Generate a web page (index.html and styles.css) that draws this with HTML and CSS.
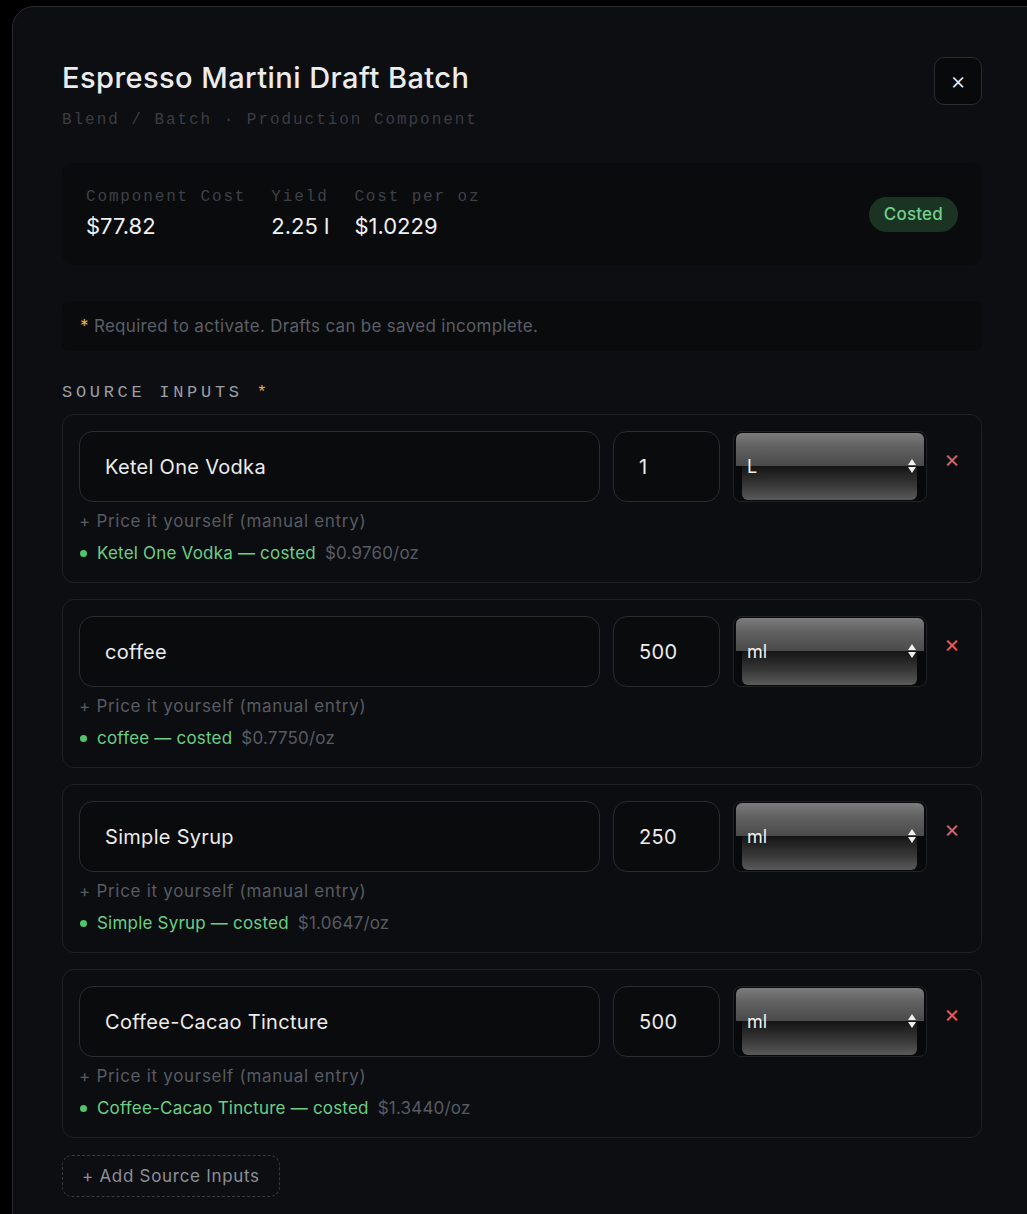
FILE: index.html
```html
<!DOCTYPE html>
<html>
<head>
<meta charset="utf-8">
<link rel="stylesheet" href="styles.css">
</head>
<body>
<div class="modal">
  <div class="head">
    <div>
      <h1 class="title">Espresso Martini Draft Batch</h1>
      <div class="sub">Blend / Batch · Production Component</div>
    </div>
    <button class="close">×</button>
  </div>

  <div class="stats">
    <div class="stat">
      <div class="stat-label">Component Cost</div>
      <div class="stat-value">$77.82</div>
    </div>
    <div class="stat">
      <div class="stat-label">Yield</div>
      <div class="stat-value">2.25 l</div>
    </div>
    <div class="stat">
      <div class="stat-label">Cost per oz</div>
      <div class="stat-value">$1.0229</div>
    </div>
    <div class="badge">Costed</div>
  </div>

  <div class="notice"><span class="ast">*</span> Required to activate. Drafts can be saved incomplete.</div>

  <div class="section-label">SOURCE INPUTS <span class="ast">*</span></div>

  <div class="cards">
    <div class="card">
      <div class="row">
        <div class="field name">Ketel One Vodka</div>
        <div class="field qty">1</div>
        <div class="select"><div class="sel-top"></div><div class="sel-bot"></div><span class="sel-text">L</span><span class="sel-arrows"><i class="up"></i><i class="down"></i></span></div>
        <div class="remove">×</div>
      </div>
      <div class="manual">+ Price it yourself (manual entry)</div>
      <div class="status"><span class="dot"></span><span class="ok">Ketel One Vodka — costed</span><span class="price">$0.9760/oz</span></div>
    </div>
    <div class="card">
      <div class="row">
        <div class="field name">coffee</div>
        <div class="field qty">500</div>
        <div class="select"><div class="sel-top"></div><div class="sel-bot"></div><span class="sel-text">ml</span><span class="sel-arrows"><i class="up"></i><i class="down"></i></span></div>
        <div class="remove">×</div>
      </div>
      <div class="manual">+ Price it yourself (manual entry)</div>
      <div class="status"><span class="dot"></span><span class="ok">coffee — costed</span><span class="price">$0.7750/oz</span></div>
    </div>
    <div class="card">
      <div class="row">
        <div class="field name">Simple Syrup</div>
        <div class="field qty">250</div>
        <div class="select"><div class="sel-top"></div><div class="sel-bot"></div><span class="sel-text">ml</span><span class="sel-arrows"><i class="up"></i><i class="down"></i></span></div>
        <div class="remove">×</div>
      </div>
      <div class="manual">+ Price it yourself (manual entry)</div>
      <div class="status"><span class="dot"></span><span class="ok">Simple Syrup — costed</span><span class="price">$1.0647/oz</span></div>
    </div>
    <div class="card">
      <div class="row">
        <div class="field name">Coffee-Cacao Tincture</div>
        <div class="field qty">500</div>
        <div class="select"><div class="sel-top"></div><div class="sel-bot"></div><span class="sel-text">ml</span><span class="sel-arrows"><i class="up"></i><i class="down"></i></span></div>
        <div class="remove">×</div>
      </div>
      <div class="manual">+ Price it yourself (manual entry)</div>
      <div class="status"><span class="dot"></span><span class="ok">Coffee-Cacao Tincture — costed</span><span class="price">$1.3440/oz</span></div>
    </div>
  </div>

  <button class="add">+ Add Source Inputs</button>
</div>
</body>
</html>
```

FILE: styles.css
```css
html, body {
  margin: 0;
  padding: 0;
  background: #000;
  height: 1214px;
  overflow: hidden;
}
body {
  font-family: "Inter", "Liberation Sans", sans-serif;
  color: #e6e6e6;
}
.modal {
  margin: 6px 0 0 12px;
  width: 1040px;
  height: 1260px;
  box-sizing: border-box;
  background: #0d0e12;
  border: 1px solid #2a2b30;
  border-radius: 22px;
  padding: 49px 0 0 49px;
}
.modal > * { width: 920px; box-sizing: border-box; }
.head {
  display: flex;
  justify-content: space-between;
  align-items: flex-start;
}
.title {
  margin: 0;
  font-size: 29px;
  font-weight: 500;
  letter-spacing: 0.45px;
  color: #ececec;
  line-height: 44px;
}
.sub {
  margin-top: 11px;
  font-family: "Liberation Mono", "DejaVu Sans Mono", monospace;
  font-size: 16px;
  letter-spacing: 1.95px;
  color: #3a3d44;
  line-height: 18px;
}
.close {
  width: 48px;
  height: 48px;
  margin-top: 1px;
  border: 1px solid #2b2d32;
  background: #08090b;
  border-radius: 10px;
  color: #f0f0f0;
  font-size: 24px;
  font-weight: 300;
  font-family: "Inter", sans-serif;
  line-height: 1;
  padding: 0;
}
.stats {
  margin-top: 34px;
  background: #0a0b0d;
  border-radius: 12px;
  height: 102px;
  padding: 23px 24px 0 24px;
  display: flex;
  gap: 25px;
  align-items: flex-start;
}
.stat-label {
  font-family: "Liberation Mono", "DejaVu Sans Mono", monospace;
  font-size: 16px;
  letter-spacing: 1.85px;
  color: #3e4148;
  line-height: 22px;
}
.stat-value {
  font-size: 22px;
  color: #f0f0f0;
  line-height: 34px;
  margin-top: 1px;
}
.badge {
  margin-left: auto;
  margin-top: 11px;
  background: #1a3323;
  color: #73d08a;
  font-size: 17px;
  font-weight: 500;
  height: 35px;
  line-height: 35px;
  padding: 0 15px;
  border-radius: 18px;
  letter-spacing: 0.2px;
}
.notice {
  margin-top: 36px;
  background: #0a0b0d;
  border-radius: 8px;
  height: 50px;
  line-height: 50px;
  padding-left: 18px;
  font-size: 17px;
  letter-spacing: 0.3px;
  color: #5b5f67;
}
.ast { color: #e8b54a; }
.section-label {
  margin-top: 31px;
  font-family: "Liberation Mono", "DejaVu Sans Mono", monospace;
  font-size: 17px;
  letter-spacing: 3.7px;
  color: #9a9ea6;
  line-height: 22px;
}
.cards {
  margin-top: 10px;
  display: flex;
  flex-direction: column;
  gap: 16px;
}
.card {
  border: 1px solid #1f2125;
  border-radius: 12px;
  background: #0c0d10;
  height: 169px;
  box-sizing: border-box;
  padding: 16px 16px 0 16px;
}
.row {
  display: flex;
  align-items: flex-start;
  gap: 13px;
}
.field {
  height: 71px;
  box-sizing: border-box;
  border: 1px solid #2a2c31;
  border-radius: 14px;
  background: #0a0b0d;
  font-size: 20px;
  letter-spacing: 0.3px;
  color: #ececec;
  display: flex;
  align-items: center;
  padding-left: 25px;
}
.name { width: 521px; }
.qty { width: 107px; }
.select {
  position: relative;
  width: 194px;
  height: 71px;
  box-sizing: border-box;
  border: 1px solid #202226;
  border-radius: 8px;
  background: #08090b;
  overflow: hidden;
}
.sel-top {
  position: absolute;
  left: 2px; right: 2px; top: 1px;
  height: 33px;
  border-radius: 6px 6px 0 0;
  background: linear-gradient(#7c7c7c, #626262 40%, #4a4a4a);
}
.sel-bot {
  position: absolute;
  left: 8px; right: 9px; top: 34px; bottom: 1px;
  border-radius: 0 0 6px 6px;
  background: linear-gradient(#141414, #3a3a3a 60%, #5a5a5a);
}
.sel-text {
  position: absolute;
  left: 13px;
  top: 24px;
  font-size: 18px;
  color: #f2f2f2;
  line-height: 22px;
}
.sel-arrows {
  position: absolute;
  right: 10px;
  top: 27px;
  display: flex;
  flex-direction: column;
  gap: 2px;
}
.sel-arrows i {
  display: block;
  width: 0; height: 0;
  border-left: 4px solid transparent;
  border-right: 4px solid transparent;
}
.sel-arrows .up { border-bottom: 6px solid #f0f0f0; }
.sel-arrows .down { border-top: 6px solid #f0f0f0; }
.remove {
  margin-left: 4px;
  margin-top: 14px;
  color: #e06060;
  font-size: 24px;
  line-height: 28px;
  width: 14px;
}
.manual {
  margin-top: 8px;
  font-size: 17px;
  letter-spacing: 0.7px;
  color: #575b62;
  line-height: 22px;
}
.status {
  margin-top: 10px;
  font-size: 17px;
  letter-spacing: 0.2px;
  line-height: 22px;
  display: flex;
  align-items: center;
}
.dot {
  width: 7px; height: 7px;
  border-radius: 50%;
  background: #4fc66c;
  margin-left: 1px;
  margin-right: 10px;
}
.ok { color: #6ccf85; }
.price { color: #575b62; margin-left: 9px; }
.add {
  margin-top: 17px;
  width: auto;
  height: 42px;
  padding: 0 19px;
  border: 1px dashed #3a3c41;
  border-radius: 10px;
  background: transparent;
  color: #8c9098;
  font-family: "Inter", sans-serif;
  font-size: 17px;
  letter-spacing: 0.7px;
}
```
